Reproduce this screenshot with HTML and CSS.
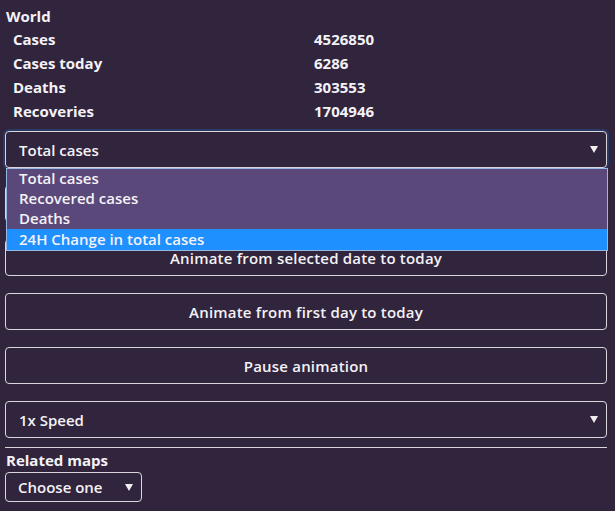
FILE: index.html
```html
<!DOCTYPE html>
<html>
<head>
<meta charset="utf-8">
<link rel="stylesheet" href="styles.css">
</head>
<body>
<div class="panel">
  <div class="title">World</div>
  <div class="stats">
    <div class="row"><span class="label">Cases</span><span class="value">4526850</span></div>
    <div class="row"><span class="label">Cases today</span><span class="value">6286</span></div>
    <div class="row"><span class="label">Deaths</span><span class="value">303553</span></div>
    <div class="row"><span class="label">Recoveries</span><span class="value">1704946</span></div>
  </div>
  <div class="select-wrap">
    <div class="select focused"><span>Total cases</span><span class="arrow"></span></div>
    <ul class="options">
      <li>Total cases</li>
      <li>Recovered cases</li>
      <li>Deaths</li>
      <li class="active">24H Change in total cases</li>
    </ul>
  </div>
  <div class="btn">Select date</div>
  <div class="btn">Animate from selected date to today</div>
  <div class="btn">Animate from first day to today</div>
  <div class="btn">Pause animation</div>
  <div class="select"><span>1x Speed</span><span class="arrow"></span></div>
  <hr class="sep">
  <div class="title small">Related maps</div>
  <div class="select mini"><span>Choose one</span><span class="arrow"></span></div>
</div>
</body>
</html>
```
FILE: styles.css
```css
html, body {
  margin: 0;
  padding: 0;
  background: #31243d;
  color: #f4f2f6;
  font-family: "Open Sans", "Lato", sans-serif;
  font-weight: 600;
  font-size: 14px;
}
.panel {
  display: flex;
  flex-direction: column;
  padding: 6px 8px 0 5px;
}
.title {
  font-size: 15px;
  line-height: 20px;
  padding-left: 1px;
  font-weight: 700;
}
.stats {
  display: flex;
  flex-direction: column;
  padding-left: 8px;
  margin-top: 1px;
  font-weight: 700;
}
.row {
  display: grid;
  grid-template-columns: 301px 1fr;
  height: 24px;
  align-items: center;
  font-size: 15px;
}
.select-wrap {
  position: relative;
  margin-top: 8px;
}
.select, .btn {
  box-sizing: border-box;
  height: 37px;
  border: 1px solid #d9d6dc;
  border-radius: 4px;
  display: flex;
  align-items: center;
}
.select {
  justify-content: space-between;
  padding: 0 8px 0 13px;
  font-size: 15px;
}
.select.focused {
  box-shadow: 0 0 0 2px #283a63;
}
.btn {
  justify-content: center;
  margin-top: 17px;
  font-size: 15px;
  letter-spacing: 0.2px;
}
.btn + .select { margin-top: 17px; }
.arrow {
  width: 0;
  height: 0;
  border-left: 4px solid transparent;
  border-right: 4px solid transparent;
  border-top: 7px solid #eeeeee;
}
.options {
  position: absolute;
  left: 1px;
  right: -1px;
  top: 37px;
  margin: 0;
  padding: 0;
  list-style: none;
  background: #5a487a;
  border: 1px solid #98b8e4;
  z-index: 2;
}
.options li {
  height: 20px;
  line-height: 19px;
  padding-left: 12px;
  font-size: 15px;
}
.options li.active {
  background: #1e90ff;
  height: 21px;
  line-height: 20px;
}
.sep {
  border: 0;
  border-top: 1px solid #d9d6dc;
  margin: 9px 0 0;
  height: 0;
}
.title.small {
  margin-top: 2px;
}
.select.mini {
  width: 137px;
  height: 30px;
  margin-top: 2px;
  padding: 0 8px 0 12px;
}
```
